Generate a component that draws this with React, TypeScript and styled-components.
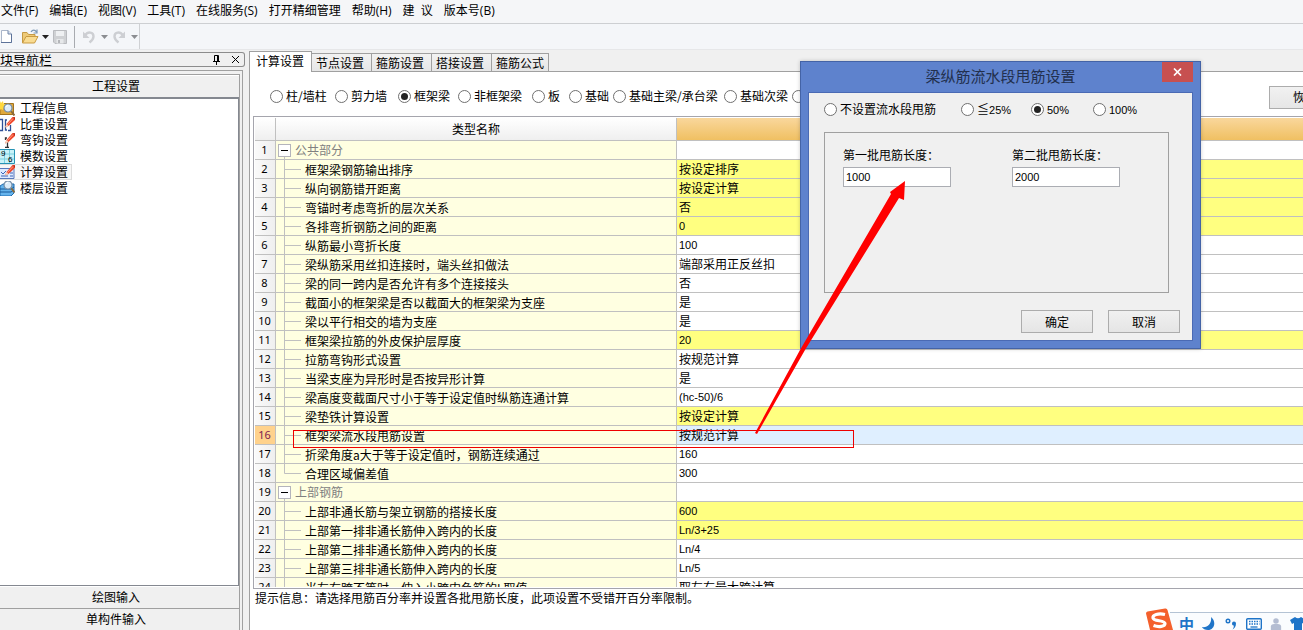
import React from "react";
import styled, { createGlobalStyle, css } from "styled-components";

const line = "#c0c0c0";
const edge = "#a0a0a0";
const face = "#f0f0f0";

const GlobalStyle = createGlobalStyle`
  * { box-sizing: border-box; }
  body {
    margin: 0;
    overflow: hidden;
    background: ${face};
    color: #000;
    font: 12px/18px "Noto Sans CJK SC", sans-serif;
  }
  button, input { font: inherit; color: inherit; margin: 0; padding: 0; border: 0; border-radius: 0; }
  button { background: none; white-space: nowrap; text-align: left; }
  svg { display: block; flex: none; }
`;

const Window = styled.div`
  position: relative;
  display: flex;
  flex-direction: column;
  height: 100vh;
  overflow: hidden;
`;

const MenuBar = styled.nav`
  display: flex;
  gap: 11px;
  height: 24px;
  padding: 2px 1px 0;
  background: #f5f6f8;
  border-bottom: 1px solid #cdcfd2;
  font-family: "Open Sans", "Noto Sans CJK SC", sans-serif;
`;
const MenuItem = styled.button`
  height: 18px;
  white-space: pre;
`;

const ToolStrip = styled.div`
  display: flex;
  height: 26px;
  background: #f4f6f9;
  border-bottom: 1px solid #e6e7e9;
`;
const ToolBar = styled.div`
  display: flex;
  align-items: center;
  width: 140px;
  border-right: 1px solid #cfd1d4;
`;
const ToolButton = styled.button<{ $w: number }>`
  width: ${(p) => p.$w}px;
`;
const ToolSeparator = styled.span`
  width: 1px;
  height: 22px;
  margin-right: 8px;
  background: #a8abb0;
`;

const Body = styled.div`
  display: flex;
  flex: 1;
  min-height: 0;
`;

const Side = styled.aside`
  display: flex;
  flex-direction: column;
  width: 249px;
  padding-top: 2px;
`;
const SideTitle = styled.header`
  display: flex;
  align-items: center;
  justify-content: space-between;
  height: 15px;
  width: 245px;
  padding-right: 4px;
  border: 1px solid #8c8c8c;
  border-left: 0;
  border-radius: 0 3px 3px 0;
  font-size: 13px;
  line-height: 13px;
  overflow: hidden;
`;
const TitleTools = styled.div`
  display: flex;
  gap: 10px;
`;
const SideFrame = styled.div`
  display: flex;
  flex: 1;
  width: 243px;
  margin-top: 3px;
  padding: 3px 2px 0 0;
  border: solid ${edge};
  border-width: 1px 1px 0 0;
`;
const SideInner = styled.div`
  display: flex;
  flex: 1;
  flex-direction: column;
  border: solid ${edge};
  border-width: 1px 1px 0 0;
`;
const SideButton = styled.button`
  height: 22px;
  padding: 0 7px 1px 0;
  text-align: center;
  border-top: 1px solid #fff;
  & + & { border-top-color: ${edge}; }
`;
const SideList = styled.div`
  display: flex;
  flex: 1;
  flex-direction: column;
  align-items: flex-start;
  padding-top: 1px;
  background: #fff;
  border: solid #848890;
  border-width: 2px 1px 1px 0;
`;
const SideItem = styled.button<{ $on?: boolean }>`
  display: flex;
  align-items: center;
  gap: 5px;
  height: 16px;
  padding-right: 3px;
  line-height: 14px;
  border: 1px solid ${(p) => (p.$on ? "#dcdcdc" : "transparent")};
  border-left: 0;
  background: ${(p) => (p.$on ? "#f7f7f7" : "transparent")};
`;

const Main = styled.main`
  display: flex;
  flex: 1;
  flex-direction: column;
  min-width: 0;
  padding-top: 1px;
  background: ${face};
`;
const TabStrip = styled.div`
  display: flex;
  align-items: flex-end;
  height: 21px;
  border-bottom: 1px solid ${edge};
  border-left: 1px solid ${edge};
`;
const Tab = styled.button<{ $on?: boolean }>`
  height: 18px;
  padding: 0 7px 0 4px;
  border: 1px solid ${edge};
  border-width: 1px 1px 0 0;
  background: linear-gradient(#f2f2f2, #e6e6e6);
  &:last-child { padding-right: 4px; }
  ${(p) =>
    p.$on &&
    css`
      height: 21px;
      margin-bottom: -1px;
      padding: 0 7px 2px 6px;
      background: #fff;
    `}
`;
const Page = styled.section`
  display: flex;
  flex: 1;
  flex-direction: column;
  min-height: 0;
  padding: 13px 0 0 4px;
  background: #fff;
  border-left: 1px solid ${edge};
`;
const TypeRow = styled.div`
  display: flex;
  align-items: center;
  height: 22px;
  padding-left: 16px;
`;
const RadioLabel = styled.label<{ $w: number }>`
  display: flex;
  align-items: center;
  gap: 3px;
  flex: none;
  width: ${(p) => p.$w}px;
  white-space: nowrap;
`;
const Radio = styled.input`
  appearance: none;
  display: grid;
  place-items: center;
  flex: none;
  width: 13px;
  height: 13px;
  border: 1px solid #707070;
  border-radius: 50%;
  background: #fff;
  &:checked::before {
    content: "";
    width: 7px;
    height: 7px;
    border-radius: 50%;
    background: #222;
  }
`;
const ResetButton = styled.button`
  flex: none;
  height: 23px;
  width: 72px;
  margin: 2px -38px 0 auto;
  padding-left: 23px;
  border: 1px solid #acacac;
  background: linear-gradient(#f1f1f1, #e6e6e6);
`;

const GridFrame = styled.div`
  flex: 1;
  min-height: 0;
  margin-top: 9px;
  margin-left: -1px;
  padding: 1px 0 1px 1px;
  border: solid #a5a5ad;
  border-width: 1px 0 1px 1px;
`;
const GridClip = styled.div`
  height: 100%;
  overflow: hidden;
`;
const Grid = styled.table`
  width: 100%;
  table-layout: fixed;
  border-collapse: separate;
  border-spacing: 0;
`;
const HeadCell = styled.th<{ $w?: number; $hot?: boolean }>`
  width: ${(p) => (p.$w ? `${p.$w}px` : "auto")};
  height: 23px;
  padding: 0;
  font-weight: normal;
  border: solid ${line};
  border-width: 0 ${(p) => (p.$hot ? 0 : 1)}px 1px 0;
  background: ${(p) => (p.$hot ? "linear-gradient(#f9d79c, #f0c062)" : "linear-gradient(#fff, #efefef)")};
`;
const NumCell = styled.th<{ $on?: boolean }>`
  padding: 0 1px 0 0;
  text-align: center;
  font: 11px/18px "Noto Sans", sans-serif;
  color: ${(p) => (p.$on ? "#802050" : "#000")};
  border: solid ${line};
  border-width: 0 1px 1px 0;
  background: ${(p) => (p.$on ? "#ffd28c" : "linear-gradient(90deg, #fafafa, #efefef)")};
`;
const NameCell = styled.td`
  padding: 0;
  border: solid ${line};
  border-width: 0 1px 1px 0;
  background: #ffffe1;
  white-space: nowrap;
`;
const LeafName = styled.div`
  display: flex;
  gap: 4px;
  height: 18px;
  padding-left: 8px;
  line-height: 20px;
`;
const GroupName = styled.div`
  display: flex;
  align-items: center;
  gap: 4px;
  height: 18px;
  padding-left: 2px;
  color: #808080;
  background: linear-gradient(${line}, ${line}) 8px 100% / 1px 3px no-repeat;
`;
const Toggle = styled.button`
  display: grid;
  place-items: center;
  width: 13px;
  height: 13px;
  border: 1px solid #b4b4bc;
  background: #fff;
  &::before {
    content: "";
    width: 7px;
    height: 1px;
    background: #000;
  }
`;
const Latin = styled.span`
  font: 11px/16px "Liberation Sans", sans-serif;
`;
const fills = { y: "#ffff80", w: "#fff", b: "#dfefff" };
const ValueCell = styled.td<{ $fill: keyof typeof fills }>`
  padding: 0 0 0 2px;
  line-height: 18px;
  border-bottom: 1px solid ${line};
  background: ${(p) => fills[p.$fill]};
  white-space: nowrap;
  ${Latin} { display: block; }
`;
const Hint = styled.p`
  height: 41px;
  margin: 0;
  padding-left: 1px;
`;

const Dialog = styled.div`
  position: absolute;
  left: 800px;
  top: 61px;
  display: flex;
  flex-direction: column;
  width: 401px;
  height: 288px;
  padding: 0 7px 7px;
  border: 1px solid #4463a6;
  background: #5e82cd;
  box-shadow: 0 0 4px rgba(0, 0, 0, 0.2);
`;
const DialogTitle = styled.header`
  display: grid;
  grid-template-columns: 31px 1fr 31px;
  height: 30px;
  color: #22304e;
`;
const TitleText = styled.h1`
  grid-column: 2;
  margin: 0;
  font-size: 15px;
  line-height: 28px;
  font-weight: normal;
  text-align: center;
`;
const CloseButton = styled.button`
  display: grid;
  place-items: center;
  height: 20px;
  background: #c75050;
`;
const DialogBody = styled.div`
  display: flex;
  flex: 1;
  flex-direction: column;
  padding: 7px 12px 7px 15px;
  border: 1px solid #4a6ab4;
  background: ${face};
`;
const PercentRow = styled.div`
  display: flex;
  height: 18px;
`;
const GroupBox = styled.div`
  display: flex;
  gap: 61px;
  height: 161px;
  margin: 14px 11px 17px 0;
  padding: 13px 18px;
  border: 1px solid ${edge};
`;
const Field = styled.label`
  display: flex;
  flex-direction: column;
  gap: 3px;
  width: 108px;
`;
const TextBox = styled.input`
  width: 108px;
  height: 20px;
  padding: 0 2px 1px;
  border: 1px solid #abadb3;
  background: #fff;
  font: 11px/16px "Liberation Sans", sans-serif;
`;
const Buttons = styled.div`
  display: flex;
  justify-content: flex-end;
  gap: 15px;
`;
const PushButton = styled.button`
  width: 72px;
  height: 23px;
  text-align: center;
  border: 1px solid #acacac;
  background: linear-gradient(#f0f0f0, #e5e5e5);
`;

const RedFrame = styled.div`
  position: absolute;
  left: 293px;
  top: 430px;
  width: 561px;
  height: 18px;
  border: 1px solid #e00;
  pointer-events: none;
`;
const Arrow = styled.svg`
  position: absolute;
  left: 750px;
  top: 175px;
  pointer-events: none;
`;
const ImeBar = styled.div`
  position: absolute;
  right: 0;
  bottom: 0;
  display: flex;
  align-items: flex-end;
`;
const ImeLogo = styled.svg`
  z-index: 1;
  margin-right: -3px;
`;
const ImeTools = styled.div`
  display: flex;
  align-items: center;
  gap: 8px;
  width: 133px;
  height: 18px;
  padding: 4px 0 0 9px;
  border-top: 1px solid #b4c3d4;
  background: #fafcfe;
  color: #1e74c8;
  overflow: hidden;
`;
const ImeMode = styled.span`
  font-size: 15px;
  line-height: 14px;
  font-weight: bold;
`;

const Caret = ({ on }: { on?: boolean }) => (
  <svg width="7" height="4" viewBox="0 0 7 4"><path d="M0 0h7L3.5 4z" fill={on ? "#222" : "#8b8d91"} /></svg>
);

const NewIcon = () => (
  <svg width="12" height="15" viewBox="0 0 12 15">
    <path d="M1.500 1.500H8L11.500 5V13.500H1.500z" fill="#fff" stroke="#a9b5c9" />
    <path d="M8 1.500V5H11.500" fill="#d5dfee" stroke="#6f84a8" />
    <path d="M1 13.500H11.500V5" fill="none" stroke="#5c7299" />
  </svg>
);
const OpenIcon = () => (
  <svg width="17" height="15" viewBox="0 0 17 15">
    <path d="M.5 14V3.500H5l1.500 2H13V8" fill="#eeca78" stroke="#c59a45" />
    <path d="M.5 14L4 7.500h12L12.500 14z" fill="#f9dc92" stroke="#c99b42" />
    <path d="M9 3c1.500-2.500 4-2.500 5.500 0M15 .5V4h-3.500" fill="none" stroke="#7c98b5" strokeWidth="1.200" />
  </svg>
);
const SaveIcon = () => (
  <svg width="14" height="14" viewBox="0 0 14 14">
    <path d="M.5.5h13v13H2L.5 12z" fill="#cfd1d4" stroke="#b9bbbf" />
    <path d="M3 1h8v5H3z" fill="#eef0f2" />
    <path d="M3.500 9h7v4.500h-7z" fill="#e6e8ea" />
    <path d="M5 10h2v3H5z" fill="#b4b6ba" />
  </svg>
);
const UndoIcon = ({ flip }: { flip?: boolean }) => (
  <svg width="13" height="14" viewBox="0 0 13 14">
    <g transform={flip ? "translate(13 0) scale(-1 1)" : undefined}>
      <path d="M2 5.500C5 1 10.500 2 10.500 6.500c0 3-2 4.500-4 6" fill="none" stroke="#cdcfd3" strokeWidth="2.400" />
      <path d="M0 1.500V8h6.500z" fill="#cdcfd3" />
    </g>
  </svg>
);

const Pen = () => (
  <g>
    <path d="M5 10.500L6.500 7 12.500 0H15v3L8.500 9z" fill="#f04a2e" />
    <path d="M7.500 7.500l5.500-6" stroke="#ff9b82" />
    <path d="M5 10.500L6.500 7 8.500 9z" fill="#f6d9c0" />
    <path d="M13 .5h2V3z" fill="#b02a1c" />
  </g>
);
const Lens = ({ x, y }: { x: number; y: number }) => (
  <g transform={`translate(${x} ${y})`}>
    <path d="M3 3l3.500 4.500" stroke="#8b6a3c" strokeWidth="2" />
    <circle r="4" fill="#dcecf9" stroke="#748ca5" strokeWidth="1.200" />
    <path d="M-2-1a2.500 2.500 0 0 1 2-1.500" stroke="#fff" fill="none" />
  </g>
);
const sideIcons: Record<string, React.ReactNode> = {
  info: (
    <>
      <path d="M4 2.500H13.500V13.500H0V8z" fill="#e0a93c" stroke="#a4741d" />
      <path d="M0 0l1 2 2-2 .5 3H6L4 5l2 2H3.500L3 9 1 8 0 9z" fill="#ffd83e" />
      <Lens x={8} y={7} />
    </>
  ),
  weight: (
    <>
      <path d="M-1 2.500H2.500V13.500H-1M7 3H5.500v10H7M8 13.500h2.500V8" fill="none" stroke="#2f4f96" strokeWidth="1.300" />
      <Pen />
    </>
  ),
  hook: (
    <>
      <path d="M7 5H5.500v2M7.500 9v5M5 14.500h4" fill="none" stroke="#333" strokeWidth="1.300" />
      <Pen />
    </>
  ),
  module: (
    <>
      <path d="M-1 .5h15.500v14H-1z" fill="#c9f2f8" stroke="#2794b5" />
      <path d="M0 5h14M0 10h14M4.500 1v13M9.500 1v13" stroke="#7bd0df" />
      <text x="1" y="7" fontSize="8" fontFamily="Liberation Sans, sans-serif">9</text>
      <text x="8" y="13" fontSize="8" fontFamily="Liberation Sans, sans-serif">6</text>
    </>
  ),
  calc: (
    <>
      <path d="M-1 3.500h15v10H-1z" fill="#dce9ff" stroke="#5877bb" />
      <path d="M1 7l2 2 3-3M1 11h7M10 8h3M10 11h3" fill="none" stroke="#3e64b5" />
      <Pen />
    </>
  ),
  floor: (
    <>
      <path d="M0 5l3-2h11v9l-3 3H0z" fill="#65b4ed" stroke="#1f6baf" />
      <path d="M0 8h11l3-2M0 11h11l3-2" fill="none" stroke="#175999" />
      <Lens x={8} y={4} />
    </>
  ),
};

const menus = ["文件(F)", "编辑(E)", "视图(V)", "工具(T)", "在线服务(S)", "打开精细管理", "帮助(H)", "建  议", "版本号(B)"];
const sideItems: [string, string][] = [
  ["info", "工程信息"], ["weight", "比重设置"], ["hook", "弯钩设置"],
  ["module", "模数设置"], ["calc", "计算设置"], ["floor", "楼层设置"],
];
const tabs = ["计算设置", "节点设置", "箍筋设置", "搭接设置", "箍筋公式"];
const types: [string, number][] = [
  ["柱/墙柱", 65], ["剪力墙", 63], ["框架梁", 60], ["非框架梁", 74], ["板", 37],
  ["基础", 44], ["基础主梁/承台梁", 111], ["基础次梁", 68], ["其它", 50],
];
const percents: [string, number][] = [["不设置流水段甩筋", 137], ["≦25%", 70], ["50%", 62], ["100%", 60]];

type Fill = keyof typeof fills;
const rows: [string, string, Fill, ("group" | "last")?][] = [
  ["公共部分", "", "w", "group"],
  ["框架梁钢筋输出排序", "按设定排序", "y"],
  ["纵向钢筋错开距离", "按设定计算", "y"],
  ["弯锚时考虑弯折的层次关系", "否", "y"],
  ["各排弯折钢筋之间的距离", "0", "y"],
  ["纵筋最小弯折长度", "100", "w"],
  ["梁纵筋采用丝扣连接时，端头丝扣做法", "端部采用正反丝扣", "w"],
  ["梁的同一跨内是否允许有多个连接接头", "否", "w"],
  ["截面小的框架梁是否以截面大的框架梁为支座", "是", "w"],
  ["梁以平行相交的墙为支座", "是", "w"],
  ["框架梁拉筋的外皮保护层厚度", "20", "y"],
  ["拉筋弯钩形式设置", "按规范计算", "w"],
  ["当梁支座为异形时是否按异形计算", "是", "w"],
  ["梁高度变截面尺寸小于等于设定值时纵筋连通计算", "(hc-50)/6", "w"],
  ["梁垫铁计算设置", "按设定计算", "y"],
  ["框架梁流水段甩筋设置", "按规范计算", "b"],
  ["折梁角度a大于等于设定值时，钢筋连续通过", "160", "w"],
  ["合理区域偏差值", "300", "w", "last"],
  ["上部钢筋", "", "w", "group"],
  ["上部非通长筋与架立钢筋的搭接长度", "600", "y"],
  ["上部第一排非通长筋伸入跨内的长度", "Ln/3+25", "y"],
  ["上部第二排非通长筋伸入跨内的长度", "Ln/4", "w"],
  ["上部第三排非通长筋伸入跨内的长度", "Ln/5", "w"],
  ["当左右跨不等时，伸入小跨内负筋的L取值", "取左右最大跨计算", "w"],
];

const Branch = ({ last }: { last?: boolean }) => (
  <svg width="17" height="19" viewBox="0 0 17 19">
    <path d={last ? "M.5 0V9.500H17" : "M.5 0V19M0 9.500H17"} fill="none" stroke={line} />
  </svg>
);

export default function App() {
  return (
    <Window>
      <GlobalStyle />
      <MenuBar>
        {menus.map((m) => <MenuItem key={m}>{m}</MenuItem>)}
      </MenuBar>
      <ToolStrip>
        <ToolBar>
          <ToolButton $w={22} aria-label="新建"><NewIcon /></ToolButton>
          <ToolButton $w={20} aria-label="打开"><OpenIcon /></ToolButton>
          <ToolButton $w={11} aria-label="打开列表"><Caret on /></ToolButton>
          <ToolButton $w={21} aria-label="保存"><SaveIcon /></ToolButton>
          <ToolSeparator />
          <ToolButton $w={18} aria-label="撤销"><UndoIcon /></ToolButton>
          <ToolButton $w={11} aria-label="撤销列表"><Caret /></ToolButton>
          <ToolButton $w={19} aria-label="重做"><UndoIcon flip /></ToolButton>
          <ToolButton $w={7} aria-label="重做列表"><Caret /></ToolButton>
        </ToolBar>
      </ToolStrip>
      <Body>
        <Side>
          <SideTitle>
            块导航栏
            <TitleTools>
              <button aria-label="固定">
                <svg width="9" height="10" viewBox="0 0 9 10">
                  <path d="M2.500 6V.5h4V6M5.500 1v5M1 6.500h7M4.500 7v3" fill="none" stroke="#000" />
                </svg>
              </button>
              <button aria-label="关闭导航栏">
                <svg width="9" height="9" viewBox="0 0 9 9"><path d="M1 1l7 7M8 1L1 8" stroke="#000" /></svg>
              </button>
            </TitleTools>
          </SideTitle>
          <SideFrame>
            <SideInner>
              <SideButton>工程设置</SideButton>
              <SideList>
                {sideItems.map(([icon, text]) => (
                  <SideItem key={icon} $on={icon === "calc"}>
                    <svg width="15" height="15" viewBox="0 0 15 15">{sideIcons[icon]}</svg>
                    {text}
                  </SideItem>
                ))}
              </SideList>
              <SideButton>绘图输入</SideButton>
              <SideButton>单构件输入</SideButton>
            </SideInner>
          </SideFrame>
        </Side>
        <Main>
          <TabStrip role="tablist">
            {tabs.map((t, i) => (
              <Tab key={t} role="tab" aria-selected={i === 0} $on={i === 0}>{t}</Tab>
            ))}
          </TabStrip>
          <Page>
            <TypeRow>
              {types.map(([t, w]) => (
                <RadioLabel key={t} $w={w}>
                  <Radio type="radio" name="type" defaultChecked={t === "框架梁"} />
                  {t}
                </RadioLabel>
              ))}
              <ResetButton>恢复</ResetButton>
            </TypeRow>
            <GridFrame>
              <GridClip>
                <Grid>
                  <thead>
                    <tr>
                      <HeadCell $w={21} />
                      <HeadCell $w={401}>类型名称</HeadCell>
                      <HeadCell $hot />
                    </tr>
                  </thead>
                  <tbody>
                    {rows.map(([name, value, fill, kind], i) => (
                      <tr key={name}>
                        <NumCell scope="row" $on={fill === "b"}>{i + 1}</NumCell>
                        <NameCell>
                          {kind === "group" ? (
                            <GroupName><Toggle aria-label="折叠" />{name}</GroupName>
                          ) : (
                            <LeafName><Branch last={kind === "last"} />{name}</LeafName>
                          )}
                        </NameCell>
                        <ValueCell $fill={fill}>
                          {/^[\x20-\x7e]+$/.test(value) ? <Latin>{value}</Latin> : value}
                        </ValueCell>
                      </tr>
                    ))}
                  </tbody>
                </Grid>
              </GridClip>
            </GridFrame>
            <Hint>提示信息：请选择甩筋百分率并设置各批甩筋长度，此项设置不受错开百分率限制。</Hint>
          </Page>
        </Main>
      </Body>

      <RedFrame />

      <Dialog role="dialog" aria-labelledby="dialog-title">
        <DialogTitle>
          <TitleText id="dialog-title">梁纵筋流水段甩筋设置</TitleText>
          <CloseButton aria-label="关闭">
            <svg width="9" height="8" viewBox="0 0 9 8"><path d="M1 .5l7 7M8 .5l-7 7" stroke="#fff" strokeWidth="1.700" /></svg>
          </CloseButton>
        </DialogTitle>
        <DialogBody>
          <PercentRow>
            {percents.map(([t, w]) => (
              <RadioLabel key={t} $w={w}>
                <Radio type="radio" name="percent" defaultChecked={t === "50%"} />
                {t.startsWith("不") ? t : <span>{t[0] === "≦" && "≦"}<Latin>{t.replace("≦", "")}</Latin></span>}
              </RadioLabel>
            ))}
          </PercentRow>
          <GroupBox>
            <Field>第一批甩筋长度：<TextBox defaultValue="1000" /></Field>
            <Field>第二批甩筋长度：<TextBox defaultValue="2000" /></Field>
          </GroupBox>
          <Buttons>
            <PushButton>确定</PushButton>
            <PushButton>取消</PushButton>
          </Buttons>
        </DialogBody>
      </Dialog>

      <Arrow width="160" height="262" viewBox="0 0 160 262">
        <path d="M155 6L154 25 149 23 55 175 7 259 5 258 50 175 141 19 140 17z" fill="#f00" />
      </Arrow>

      <ImeBar>
        <ImeLogo width="27" height="22" viewBox="0 0 27 22">
          <path d="M0 5.500Q0 4 1.500 3.500L19 .5Q21 0 21.500 2L27 22H4z" fill="#f4602c" />
          <path d="M19 6.500C12 5 6.500 7 7 10c.5 3.500 12 2 12 5.500 0 3-6 4-11.500 2" fill="none" stroke="#fff" strokeWidth="3.200" />
        </ImeLogo>
        <ImeTools>
          <ImeMode>中</ImeMode>
          <svg width="14" height="14" viewBox="0 0 14 14"><path d="M9 0c6 5 3 13-3 13-3 0-5-1-6-3 6 1 10-4 9-10z" fill="currentColor" /></svg>
          <svg width="14" height="14" viewBox="0 0 14 14">
            <circle cx="4" cy="4" r="1.800" fill="none" stroke="currentColor" strokeWidth="1.400" />
            <path d="M8 6.500a2 2 0 0 1 4 0c0 3-1.500 5-3.500 6 1-1.500 1.500-2.500 1.200-4C8.500 8.500 8 7.500 8 6.500z" fill="currentColor" />
          </svg>
          <svg width="16" height="12" viewBox="0 0 16 12">
            <rect x=".7" y=".7" width="14.600" height="10.600" rx="1" fill="#fff" stroke="currentColor" strokeWidth="1.400" />
            <path d="M3 3.500h10.500M3 6h10.500" stroke="currentColor" strokeWidth="1.500" strokeDasharray="1.500 1" />
            <path d="M4.500 9h7" stroke="currentColor" strokeWidth="1.300" />
          </svg>
          <svg width="12" height="14" viewBox="0 0 14 14"><circle cx="7" cy="3.500" r="3.200" fill="#b4bdd2" /><path d="M1 14V10q0-3 4-3h4q4 0 4 3v4z" fill="#b4bdd2" /></svg>
          <svg width="16" height="14" viewBox="0 0 16 14"><path d="M5 0q3 2.500 6 0l5 3-2 4-2-1v8H4V6L2 7 0 3z" fill="currentColor" /></svg>
        </ImeTools>
      </ImeBar>
    </Window>
  );
}
